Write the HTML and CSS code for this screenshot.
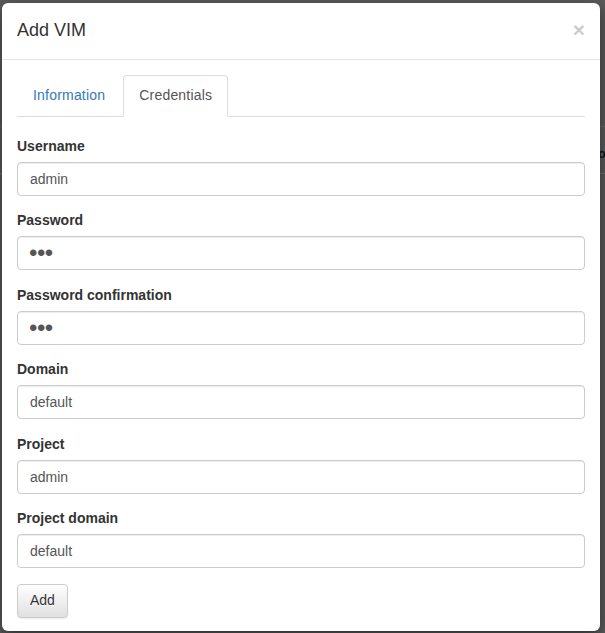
FILE: index.html
```html
<!DOCTYPE html>
<html>
<head>
<meta charset="utf-8">
<link rel="stylesheet" href="styles.css">
</head>
<body>
<div class="backdrop-page">
  <div class="page-strip"><span class="page-char">o</span></div>
</div>
<div class="modal">
  <div class="modal-header">
    <h4 class="modal-title">Add VIM</h4>
    <button class="close" type="button">×</button>
  </div>
  <div class="modal-body">
    <ul class="nav-tabs">
      <li class="tab"><a>Information</a></li>
      <li class="tab active"><a>Credentials</a></li>
    </ul>
    <form class="form">
      <div class="form-group">
        <label class="label">Username</label>
        <input class="form-control" type="text" value="admin">
      </div>
      <div class="form-group">
        <label class="label">Password</label>
        <input class="form-control secret" type="password" value="abc">
      </div>
      <div class="form-group">
        <label class="label">Password confirmation</label>
        <input class="form-control secret" type="password" value="abc">
      </div>
      <div class="form-group">
        <label class="label">Domain</label>
        <input class="form-control" type="text" value="default">
      </div>
      <div class="form-group">
        <label class="label">Project</label>
        <input class="form-control" type="text" value="admin">
      </div>
      <div class="form-group">
        <label class="label">Project domain</label>
        <input class="form-control" type="text" value="default">
      </div>
      <button class="btn" type="button">Add</button>
    </form>
  </div>
</div>
</body>
</html>
```
FILE: styles.css
```css
* { box-sizing: border-box; }
html, body {
  margin: 0;
  padding: 0;
  width: 605px;
  height: 633px;
  overflow: hidden;
}
body {
  background: #5b5b5b;
  font-family: "Liberation Sans", Arial, sans-serif;
  font-size: 14px;
  line-height: 1.42857;
  color: #333;
  position: relative;
}
.backdrop-page {
  position: absolute;
  left: 0;
  top: 0;
  width: 605px;
  height: 633px;
}
.page-strip {
  position: absolute;
  left: 0;
  top: 126px;
  width: 605px;
  height: 48px;
  border-top: 1px solid #6a6a6a;
  border-bottom: 1px solid #707070;
}
.page-char {
  position: absolute;
  left: 598px;
  top: 20px;
  font-size: 13px;
  line-height: 1;
  font-weight: bold;
  color: #111;
}
.modal {
  position: absolute;
  left: 2px;
  top: 3px;
  width: 598px;
  height: 628px;
  background: #fff;
  border-radius: 6px;
  box-shadow: 0 5px 15px rgba(0,0,0,.5);
}
.modal-header {
  display: flex;
  align-items: center;
  justify-content: space-between;
  padding: 15px;
  border-bottom: 1px solid #e5e5e5;
}
.modal-title {
  margin: 0;
  font-size: 18px;
  font-weight: 500;
  line-height: 1.42857;
  color: #333;
}
.close {
  background: none;
  border: 0;
  padding: 0;
  margin-top: -2px;
  font-family: "Liberation Sans", Arial, sans-serif;
  font-size: 21px;
  font-weight: bold;
  line-height: 1;
  color: #000;
  opacity: .2;
  text-shadow: 0 1px 0 #fff;
}
.modal-body {
  padding: 15px;
}
.nav-tabs {
  list-style: none;
  margin: 0;
  padding: 0;
  display: flex;
  border-bottom: 1px solid #ddd;
}
.tab {
  margin-bottom: -1px;
  margin-right: 2px;
}
.tab a {
  display: block;
  padding: 10px 15px;
  line-height: 1.42857;
  border: 1px solid transparent;
  border-radius: 4px 4px 0 0;
  color: #337ab7;
  letter-spacing: 0.2px;
}
.tab.active a {
  color: #555;
  background: #fff;
  border-color: #ddd #ddd transparent;
}
.form {
  padding-top: 20px;
}
.form-group {
  margin-bottom: 15.5px;
}
.label {
  display: block;
  margin-bottom: 5px;
  font-weight: bold;
  max-width: 100%;
}
.form-control {
  display: block;
  width: 100%;
  height: 34px;
  padding: 6px 12px;
  font-family: "Liberation Sans", Arial, sans-serif;
  font-size: 14px;
  line-height: 1.42857;
  color: #555;
  background: #fff;
  border: 1px solid #ccc;
  border-radius: 4px;
  box-shadow: inset 0 1px 1px rgba(0,0,0,.075);
}
.form-control.secret {
  font-size: 24px;
  line-height: 20px;
  padding: 6px 11px;
  letter-spacing: -0.5px;
}
.btn {
  display: inline-block;
  height: 34px;
  padding: 6px 12px;
  font-family: "Liberation Sans", Arial, sans-serif;
  font-size: 14px;
  line-height: 1.42857;
  color: #333;
  background: linear-gradient(to bottom, #fff 0, #e0e0e0 100%);
  border: 1px solid #ccc;
  border-radius: 4px;
  text-shadow: 0 1px 0 #fff;
  box-shadow: inset 0 1px 0 rgba(255,255,255,.15), 0 1px 1px rgba(0,0,0,.075);
}
```
